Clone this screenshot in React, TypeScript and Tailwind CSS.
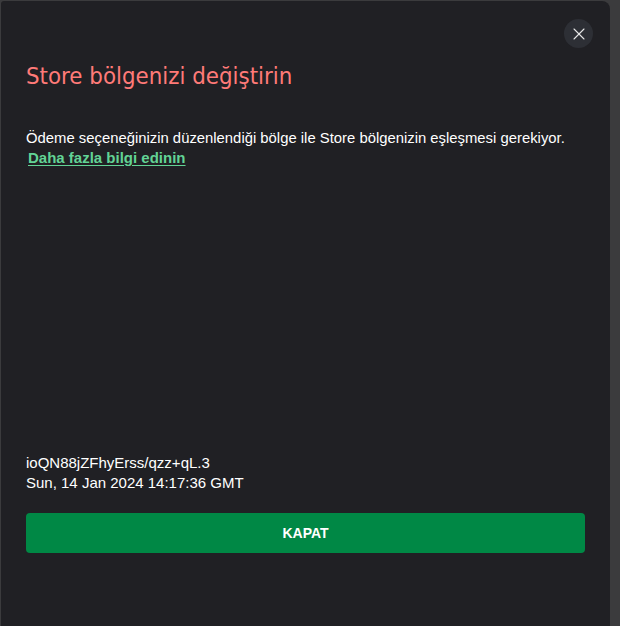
import { X } from "lucide-react";

export default function App() {
  return (
    <div className="flex h-[626px] w-[620px] bg-[#3b3b3d] pl-px pt-px">
      <div className="relative flex w-[609px] flex-col rounded-tl-[3px] rounded-tr-[8px] bg-[#202024] px-[25px] font-['Open_Sans',sans-serif]">
        <button className="absolute right-[17px] top-[18px] flex h-[29px] w-[29px] items-center justify-center rounded-full bg-[#2d2f35] text-[#e6e6e6]">
          <X size={20} strokeWidth={1.3} />
        </button>

        <h1 className="mt-[58px] font-['DejaVu_Sans_Condensed',sans-serif] text-[23.8px] leading-[34px] text-[#ff7a78]">
          Store bölgenizi değiştirin
        </h1>

        <p className="mt-[35px] font-['Liberation_Sans',sans-serif] text-[14.85px] leading-[20px] text-white">
          Ödeme seçeneğinizin düzenlendiği bölge ile Store bölgenizin eşleşmesi gerekiyor.
        </p>
        <a
          href="#"
          className="ml-[2px] w-fit font-['Liberation_Sans',sans-serif] text-[15px] font-bold leading-[20px] text-[#62d395] underline underline-offset-2"
        >
          Daha fazla bilgi edinin
        </a>

        <div className="mt-[285px] font-['Liberation_Sans',sans-serif] text-[15px] leading-[20px] text-white">
          <div>ioQN88jZFhyErss/qzz+qL.3</div>
          <div>Sun, 14 Jan 2024 14:17:36 GMT</div>
        </div>

        <button className="mt-[20px] h-[40px] w-full rounded-[4px] bg-[#008845] font-['Liberation_Sans',sans-serif] text-[14px] font-bold text-white">
          KAPAT
        </button>
      </div>
    </div>
  );
}
